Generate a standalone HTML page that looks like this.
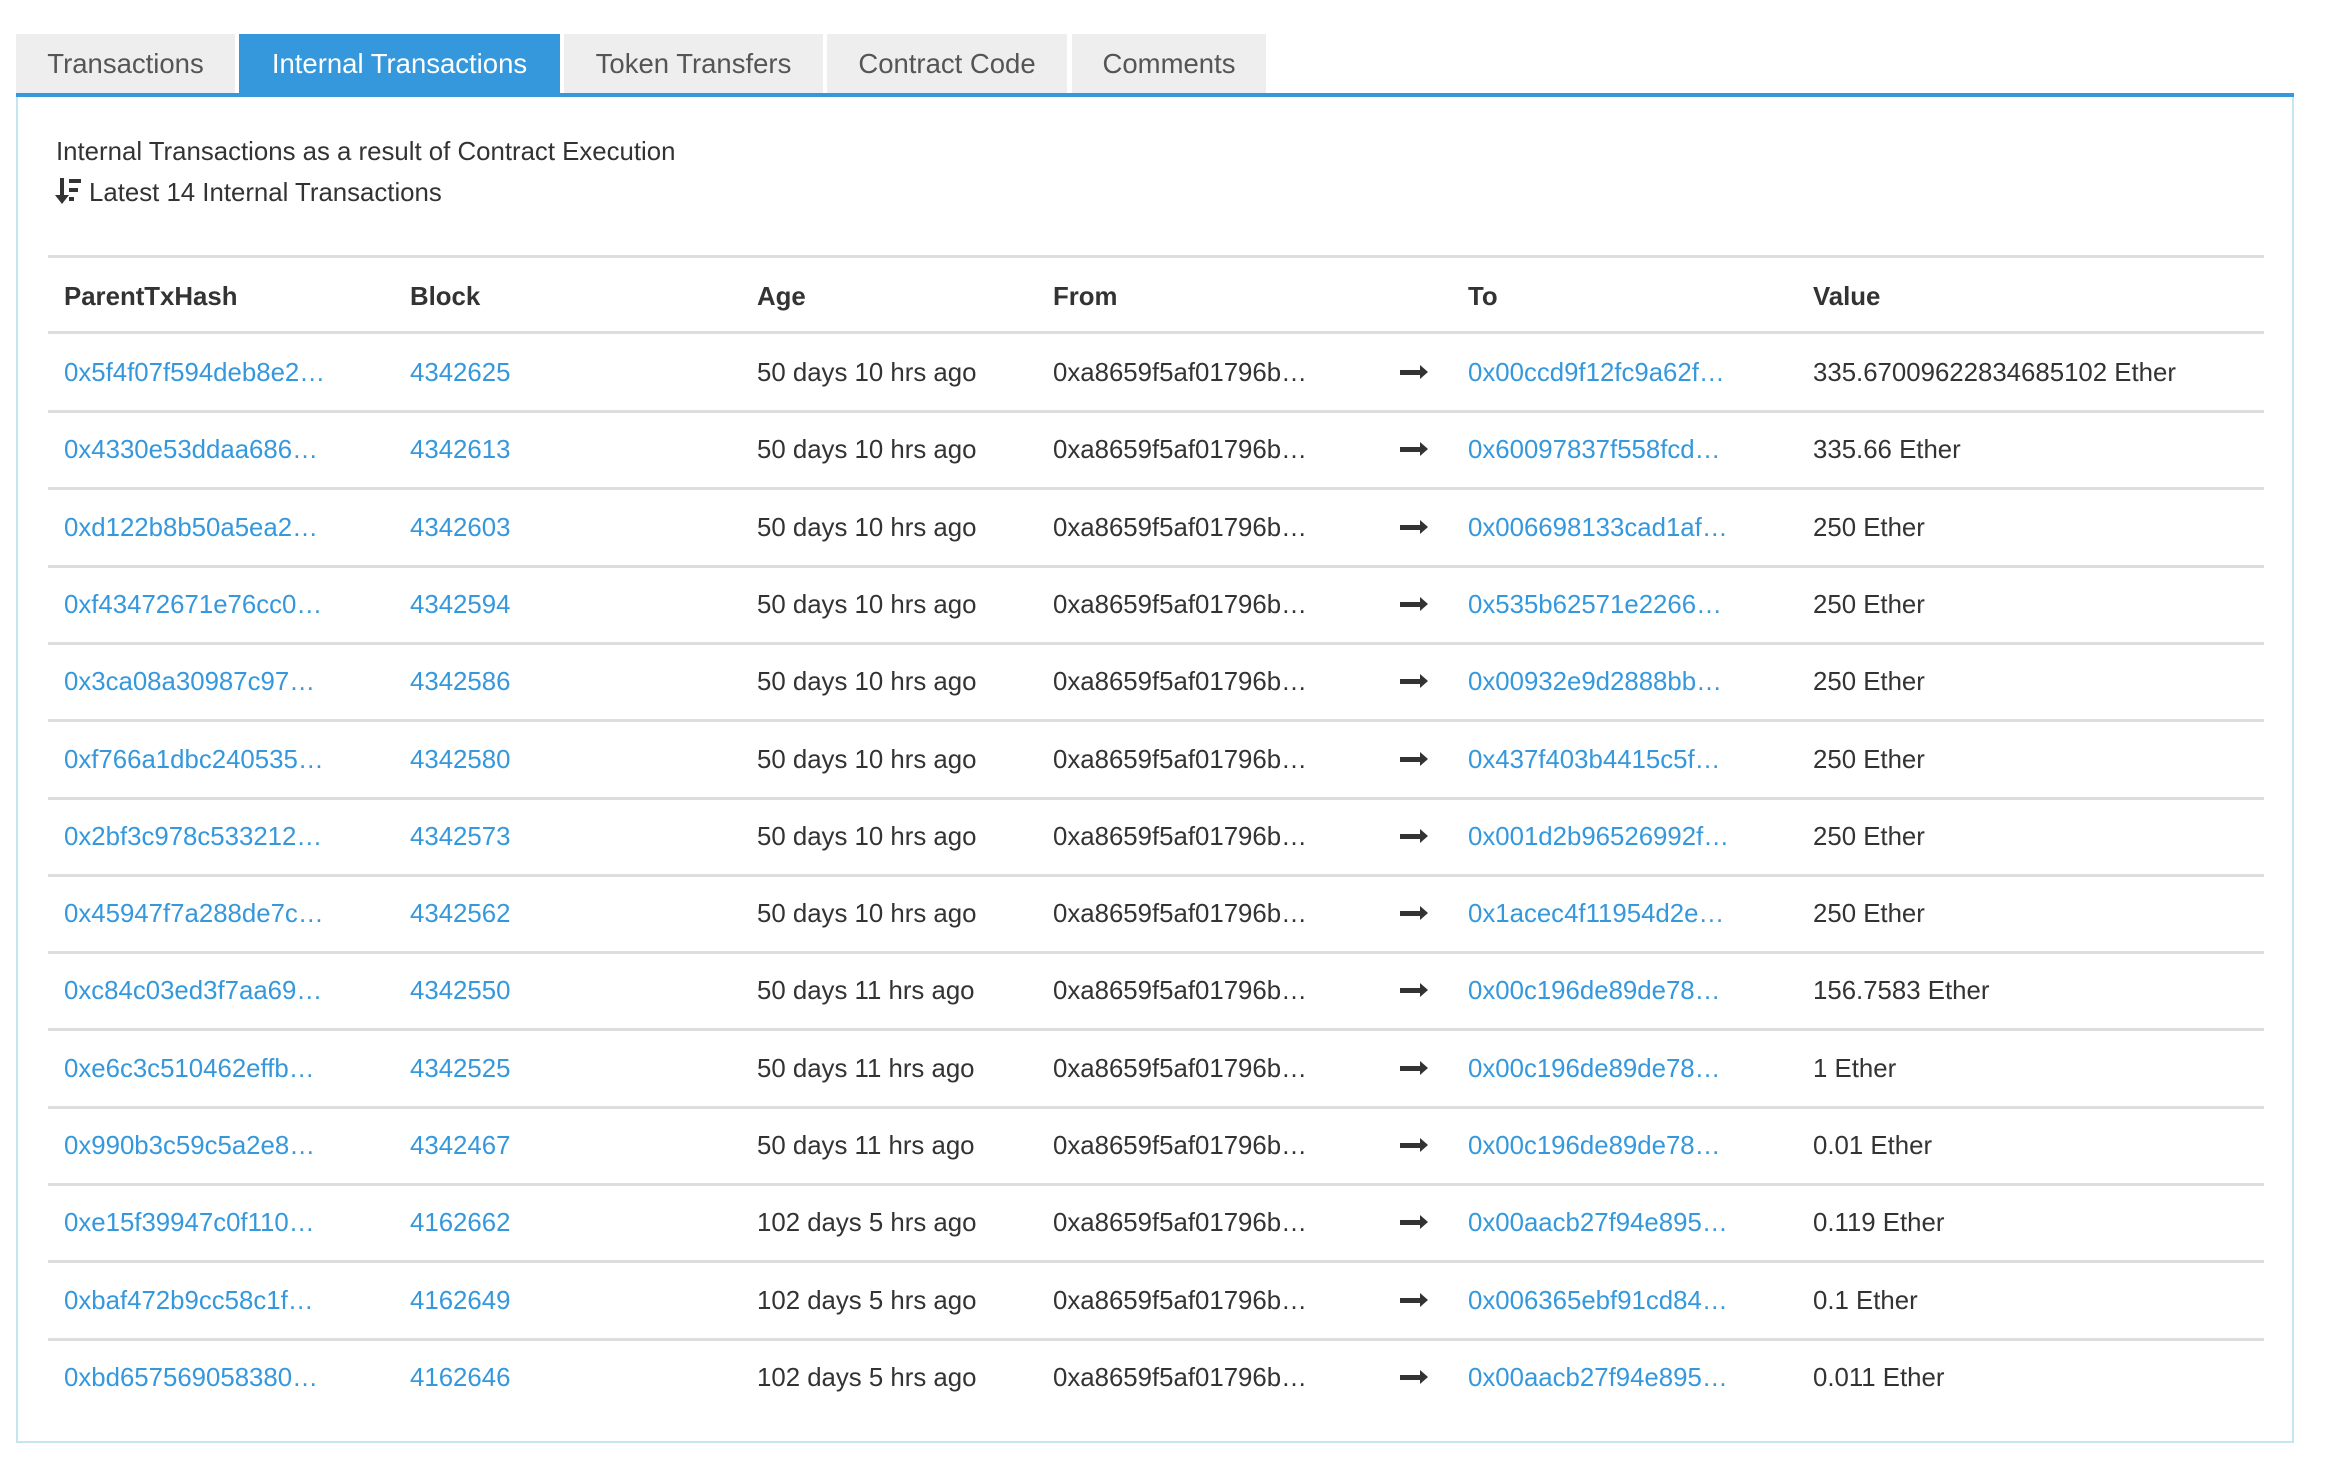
<!DOCTYPE html>
<html><head><meta charset="utf-8"><style>
*{margin:0;padding:0;box-sizing:border-box}
body{width:2339px;height:1471px;background:#fff;font-family:"Liberation Sans",Arial,sans-serif;color:#333;position:relative;overflow:hidden}
.tab{position:absolute;top:34px;height:59px;background:#eee;color:#555;font-size:27.5px;line-height:59px;text-align:center}
.tab.a{background:#3598dc;color:#fff}
.bl{position:absolute;left:16px;top:93px;width:2278px;height:4px;background:#3598dc}
.panel{position:absolute;left:16px;top:97px;width:2278px;height:1346px;border:2px solid #c3e6ef;border-top:none}
.t{position:absolute;font-size:25.8px;white-space:nowrap;line-height:30px}
.ln{position:absolute;left:48px;width:2216px;height:3px;background:#ddd}
.h{font-weight:bold}
.lk{color:#3598dc}
.ar{position:absolute;left:1400px;width:22px;height:5px;background:#333}
.ar:after{content:"";position:absolute;right:-6px;top:-5px;border-left:8px solid #333;border-top:7px solid transparent;border-bottom:7px solid transparent}
</style></head><body>
<div class="tab" style="left:16px;width:219px">Transactions</div>
<div class="tab a" style="left:239px;width:321px">Internal Transactions</div>
<div class="tab" style="left:564px;width:259px">Token Transfers</div>
<div class="tab" style="left:827px;width:240px">Contract Code</div>
<div class="tab" style="left:1072px;width:194px">Comments</div>
<div class="bl"></div>
<div class="panel"></div>
<div class="t" style="left:56px;top:137px">Internal Transactions as a result of Contract Execution</div>
<svg style="position:absolute;left:55px;top:178px" width="28" height="28" viewBox="0 0 28 28"><rect x="5" y="0" width="4" height="20" fill="#333"/><path d="M0 17h14l-7 9z" fill="#333"/><rect x="14" y="1" width="12" height="4" fill="#333"/><rect x="14" y="10" width="9" height="4" fill="#333"/><rect x="14" y="19" width="5" height="4" fill="#333"/></svg>
<div class="t" style="left:89px;top:178px">Latest 14 Internal Transactions</div>
<div class="ln" style="top:255px"></div>
<div class="t h" style="left:64px;top:282px">ParentTxHash</div>
<div class="t h" style="left:410px;top:282px">Block</div>
<div class="t h" style="left:757px;top:282px">Age</div>
<div class="t h" style="left:1053px;top:282px">From</div>
<div class="t h" style="left:1468px;top:282px">To</div>
<div class="t h" style="left:1813px;top:282px">Value</div>
<div class="ln" style="top:331px"></div>
<div id="rows"></div>
<script>
var d=[["0x5f4f07f594deb8e2…","4342625","50 days 10 hrs ago","0x00ccd9f12fc9a62f…","335.67009622834685102 Ether"],
["0x4330e53ddaa686…","4342613","50 days 10 hrs ago","0x60097837f558fcd…","335.66 Ether"],
["0xd122b8b50a5ea2…","4342603","50 days 10 hrs ago","0x006698133cad1af…","250 Ether"],
["0xf43472671e76cc0…","4342594","50 days 10 hrs ago","0x535b62571e2266…","250 Ether"],
["0x3ca08a30987c97…","4342586","50 days 10 hrs ago","0x00932e9d2888bb…","250 Ether"],
["0xf766a1dbc240535…","4342580","50 days 10 hrs ago","0x437f403b4415c5f…","250 Ether"],
["0x2bf3c978c533212…","4342573","50 days 10 hrs ago","0x001d2b96526992f…","250 Ether"],
["0x45947f7a288de7c…","4342562","50 days 10 hrs ago","0x1acec4f11954d2e…","250 Ether"],
["0xc84c03ed3f7aa69…","4342550","50 days 11 hrs ago","0x00c196de89de78…","156.7583 Ether"],
["0xe6c3c510462effb…","4342525","50 days 11 hrs ago","0x00c196de89de78…","1 Ether"],
["0x990b3c59c5a2e8…","4342467","50 days 11 hrs ago","0x00c196de89de78…","0.01 Ether"],
["0xe15f39947c0f110…","4162662","102 days 5 hrs ago","0x00aacb27f94e895…","0.119 Ether"],
["0xbaf472b9cc58c1f…","4162649","102 days 5 hrs ago","0x006365ebf91cd84…","0.1 Ether"],
["0xbd657569058380…","4162646","102 days 5 hrs ago","0x00aacb27f94e895…","0.011 Ether"]];
var h="";
for(var i=0;i<14;i++){var c=373+i*77.3,t=c-15;var r=d[i];
h+='<div class="t lk" style="left:64px;top:'+t+'px">'+r[0]+'</div>';
h+='<div class="t lk" style="left:410px;top:'+t+'px">'+r[1]+'</div>';
h+='<div class="t" style="left:757px;top:'+t+'px">'+r[2]+'</div>';
h+='<div class="t" style="left:1053px;top:'+t+'px">0xa8659f5af01796b…</div>';
h+='<div class="ar" style="top:'+(c-3)+'px"></div>';
h+='<div class="t lk" style="left:1468px;top:'+t+'px">'+r[3]+'</div>';
h+='<div class="t" style="left:1813px;top:'+t+'px">'+r[4]+'</div>';
if(i<13)h+='<div class="ln" style="top:'+(c+37)+'px"></div>';}
document.getElementById("rows").innerHTML=h;
</script>
</body></html>
